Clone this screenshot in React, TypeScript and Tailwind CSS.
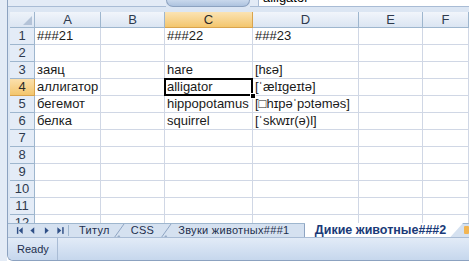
import React from 'react'

const cols = ['A', 'B', 'C', 'D', 'E', 'F']

const rows: string[][] = [
  ['###21', '', '###22', '###23', '', ''],
  ['', '', '', '', '', ''],
  ['заяц', '', 'hare', '[hɛə]', '', ''],
  ['аллигатор', '', 'alligator', '[ˈælɪgeɪtə]', '', ''],
  ['бегемот', '', 'hippopotamus', '[□hɪpəˈpɔtəməs]', '', ''],
  ['белка', '', 'squirrel', '[ˈskwɪr(ə)l]', '', ''],
  ['', '', '', '', '', ''],
  ['', '', '', '', '', ''],
  ['', '', '', '', '', ''],
  ['', '', '', '', '', ''],
  ['', '', '', '', '', ''],
  ['', '', '', '', '', ''],
]

function Slant() {
  return (
    <svg width="12" height="14" viewBox="0 0 12 14" className="shrink-0">
      <line x1="1" y1="14" x2="11" y2="0" stroke="#8ea4c2" strokeWidth="1" />
      <path d="M3 14 L8 14 L6 11 Z" fill="#9aaec8" />
    </svg>
  )
}

export default function App() {
  return (
    <div className="w-[469px] h-[268px] bg-white overflow-hidden font-['Liberation_Sans',Arial,sans-serif] text-[13px] text-black">
      <div className="flex h-[261px]">
        <div className="w-[7px] bg-[#e3ebf6]" />
        <div className="flex-1 flex flex-col border-l border-b border-[#8ca2c0] rounded-bl-[6px] bg-[#dce6f3] overflow-hidden">
          {/* formula bar strip */}
          <div className="h-[7px] flex shrink-0">
            <div className="w-[158px] bg-[#e3ebf6] border-b border-[#a9bcd5]" />
            <div className="w-[84px] bg-gradient-to-b from-[#c9d8ec] to-[#aec3df] rounded-b-[10px] border-b border-x border-[#8ca2c0]" />
            <div className="w-[8px] bg-[#e3ebf6] border-b border-[#a9bcd5]" />
            <div className="flex-1 bg-white border-b border-l border-[#a9bcd5] overflow-hidden">
              <div className="-mt-[10px] pl-[4px] leading-[16px]">alligator</div>
            </div>
          </div>
          <div className="h-[5px] shrink-0" />
          {/* grid */}
          <div className="h-[211px] overflow-hidden pl-[2px] shrink-0">
            <div className="grid grid-cols-[25px_66px_64px_88px_106px_64px_1fr] grid-rows-[16px] auto-rows-[17px] bg-white">
              <div className="relative border-r border-b border-[#9eb6ce] bg-gradient-to-b from-[#eef3fa] to-[#dbe5f2]">
                <svg width="9" height="9" className="absolute right-[2px] bottom-[2px]">
                  <path d="M9 0 L9 9 L0 9 Z" fill="#b4c3d8" />
                </svg>
              </div>
              {cols.map(c => (
                <div
                  key={c}
                  className={
                    c === 'C'
                      ? 'flex items-center justify-center border-r border-b border-[#d9a44e] bg-gradient-to-b from-[#fbe3b3] to-[#f3c66c] text-[#2a2a2a]'
                      : 'flex items-center justify-center border-r border-b border-[#9eb6ce] bg-gradient-to-b from-[#f1f5fb] to-[#dbe5f2] text-[#2e3a4e]'
                  }
                >
                  {c}
                </div>
              ))}
              {rows.map((r, i) => (
                <React.Fragment key={i}>
                  <div
                    className={
                      i === 3
                        ? 'flex items-center justify-center border-r border-b border-[#d9a44e] bg-gradient-to-b from-[#fbe0ac] to-[#f3c66c] text-[#2a2a2a] leading-[16px]'
                        : 'flex items-center justify-center border-r border-b border-[#9eb6ce] bg-[#e4ecf7] text-[#2e3a4e] leading-[16px]'
                    }
                  >
                    {i + 1}
                  </div>
                  {r.map((v, j) => (
                    <div
                      key={j}
                      className="relative border-r border-b border-[#d0d7e5] pl-[2px] leading-[16px] whitespace-nowrap text-[#1a1a1a]"
                    >
                      {v}
                      {i === 3 && j === 2 && (
                        <>
                          <div className="absolute -left-[1px] -top-[1px] -right-[1px] -bottom-[1px] border-2 border-black pointer-events-none" />
                          <div className="absolute -right-[4px] -bottom-[4px] w-[6px] h-[6px] bg-black border border-white z-10" />
                        </>
                      )}
                    </div>
                  ))}
                </React.Fragment>
              ))}
            </div>
          </div>
          {/* sheet tabs */}
          <div className="h-[14px] shrink-0 flex items-stretch border-t border-[#9eb6ce] bg-[#d5e1f0] text-[11px] leading-[13px] text-[#1e2f4d]">
            <div className="w-[60px] flex items-center text-[#2f4f86] pl-[6px]">
              <svg width="56" height="9" viewBox="0 0 56 9">
                <rect x="3" y="1" width="1.5" height="7" fill="#2f4f86" />
                <path d="M9 1 L5 4.5 L9 8 Z" fill="#2f4f86" />
                <path d="M21 1 L17 4.5 L21 8 Z" fill="#2f4f86" />
                <path d="M32 1 L36 4.5 L32 8 Z" fill="#2f4f86" />
                <path d="M45 1 L49 4.5 L45 8 Z" fill="#2f4f86" />
                <rect x="50" y="1" width="1.5" height="7" fill="#2f4f86" />
              </svg>
            </div>
            <div className="w-[1px] bg-[#9eb6ce] my-[1px]" />
            <div className="flex items-center pl-[10px] pr-[3px] tracking-[0.3px]">Титул</div>
            <Slant />
            <div className="flex items-center pl-[6px] pr-[6px] tracking-[0.3px]">CSS</div>
            <Slant />
            <div className="flex items-center pl-[6px] pr-[8px] w-[133px] whitespace-nowrap tracking-[0.3px]">Звуки животных###1</div>
            <div className="w-[1px] bg-[#8ea4c2]" />
            <div className="w-[160px] -mt-[1px] bg-white flex items-center pl-[10px] font-bold text-[12.5px] text-[#1a3a78] whitespace-nowrap [clip-path:polygon(0_0,100%_0,92%_100%,0_100%)]">
              Дикие животные###2
            </div>
            <div className="w-[5px] h-[8px] mt-[2px] ml-[1px] bg-[#f2b552] rounded-[1px]" />
          </div>
          {/* status bar */}
          <div className="flex-1 flex items-center bg-gradient-to-b from-[#e2ebf7] to-[#c6d7ed] border-t border-[#a9bcd5] text-[11px] text-[#1e2f4d]">
            <div className="w-[49px] pl-[9px]">Ready</div>
            <div className="w-[1px] h-full bg-[#a9bcd5]" />
          </div>
        </div>
      </div>
    </div>
  )
}
